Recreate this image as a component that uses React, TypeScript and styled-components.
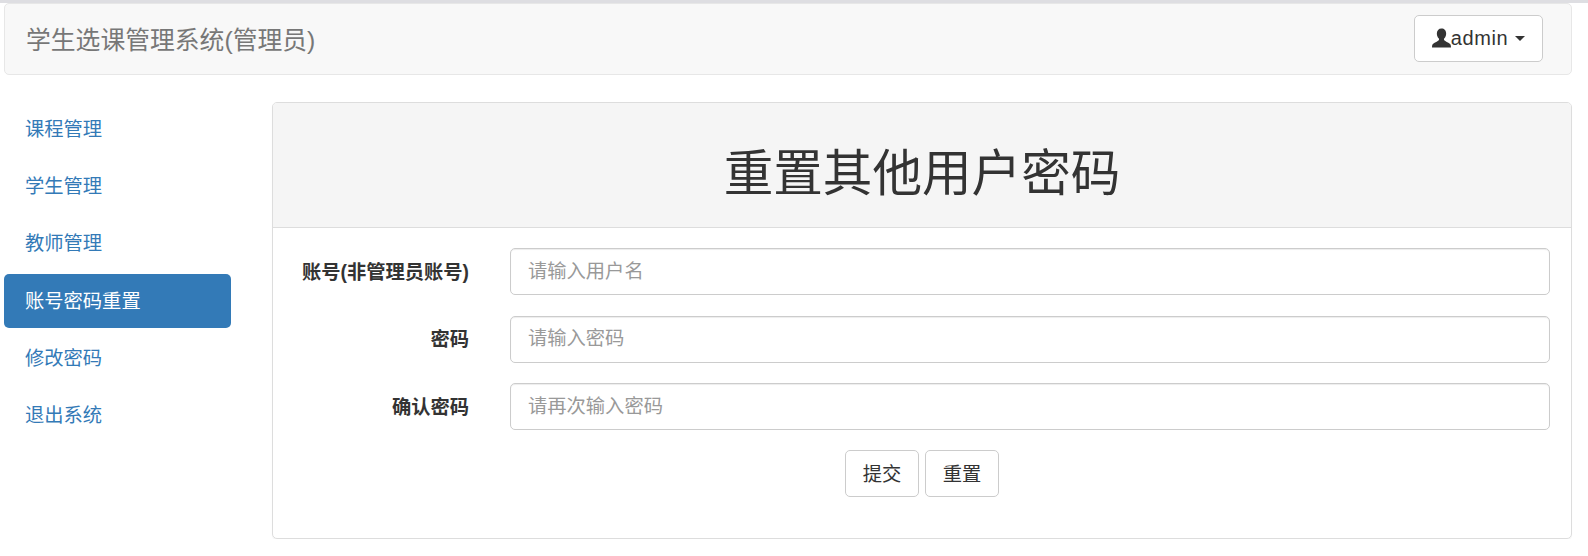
import React from "react";
import styled, { createGlobalStyle } from "styled-components";

const GlobalStyle = createGlobalStyle`
  html, body {
    margin: 0;
    background: #fff;
  }
  body {
    font-family: "Liberation Sans", "Noto Sans CJK SC", sans-serif;
    font-size: 19.3px;
    color: #333;
  }
  * {
    box-sizing: border-box;
  }
`;

const TopLine = styled.div`
  height: 3px;
  background: #dedee2;
`;

const Page = styled.div`
  padding: 0 16px 0 4px;
`;

const Navbar = styled.div`
  height: 72px;
  display: flex;
  align-items: center;
  justify-content: space-between;
  padding: 0 28px 2px 21px;
  background: #f8f8f8;
  border: 1px solid #e7e7e7;
  border-radius: 5px;
  margin-bottom: 27px;
`;

const Brand = styled.div`
  padding-bottom: 1px;
  font-size: 24.8px;
  color: #777;
`;

const UserButton = styled.button`
  width: 129px;
  height: 47px;
  display: flex;
  align-items: center;
  justify-content: center;
  padding: 0;
  font: inherit;
  font-size: 20px;
  color: #333;
  background: #fff;
  border: 1px solid #ccc;
  border-radius: 5px;
  letter-spacing: 0.6px;
`;

const Caret = styled.span`
  width: 0;
  height: 0;
  margin-left: 7px;
  border-top: 5.5px solid #333;
  border-left: 5.5px solid transparent;
  border-right: 5.5px solid transparent;
`;

const Layout = styled.div`
  display: grid;
  grid-template-columns: 227px 1fr;
  column-gap: 41px;
  align-items: start;
`;

const Sidebar = styled.nav`
  display: flex;
  flex-direction: column;
  gap: 3.3px;
  padding-top: 0.4px;
`;

const SideLink = styled.a<{ $active?: boolean }>`
  height: 54px;
  display: flex;
  align-items: center;
  padding: 0 0 3px 21px;
  border-radius: 5px;
  color: ${(p) => (p.$active ? "#fff" : "#337ab7")};
  background: ${(p) => (p.$active ? "#337ab7" : "transparent")};
`;

const Panel = styled.section`
  height: 437px;
  border: 1px solid #ddd;
  border-radius: 5px;
  box-shadow: 0 1px 1px rgba(0, 0, 0, 0.05);
  overflow: hidden;
`;

const PanelHeading = styled.div`
  height: 125px;
  display: flex;
  align-items: center;
  justify-content: center;
  padding-top: 7px;
  background: #f5f5f5;
  border-bottom: 1px solid #ddd;
`;

const Title = styled.h1`
  margin: 0;
  font-size: 49.6px;
  font-weight: 400;
  color: #333;
`;

const Form = styled.form`
  display: flex;
  flex-direction: column;
  gap: 20.5px;
  padding: 20px 21px 0 0;
`;

const Row = styled.div`
  display: grid;
  grid-template-columns: 196px 1fr;
  column-gap: 41px;
  align-items: center;
`;

const Label = styled.label`
  padding-bottom: 2px;
  text-align: right;
  font-weight: 700;
  color: #333;
`;

const Input = styled.input`
  width: 100%;
  height: 47px;
  padding: 0 17px;
  font: inherit;
  color: #555;
  border: 1px solid #ccc;
  border-radius: 5px;
  box-shadow: inset 0 1px 1px rgba(0, 0, 0, 0.075);

  &::placeholder {
    color: #999;
    opacity: 1;
  }
`;

const Actions = styled.div`
  display: flex;
  justify-content: center;
  gap: 6px;
  margin-top: -1px;
  padding-left: 21px;
`;

const Button = styled.button`
  width: 74px;
  height: 47px;
  padding: 0 0 1px;
  font: inherit;
  color: #333;
  background: #fff;
  border: 1px solid #ccc;
  border-radius: 5px;
`;

const links = ["课程管理", "学生管理", "教师管理", "账号密码重置", "修改密码", "退出系统"];

const fields = [
  { label: "账号(非管理员账号)", placeholder: "请输入用户名", type: "text" },
  { label: "密码", placeholder: "请输入密码", type: "password" },
  { label: "确认密码", placeholder: "请再次输入密码", type: "password" },
];

function UserIcon() {
  return (
    <svg width="19" height="20" viewBox="0 0 20 20" fill="#333">
      <path d="M10 0c-3 0-4.900 2.200-4.900 5.200 0 2.200.8 3.900 1.900 5.100.5.6.6 1.500.1 2.100-.9 1-4.200 2.500-5.800 3.600C.4 16.600 0 17.900 0 20h20c0-2.100-.4-3.400-1.300-4-1.600-1.100-4.900-2.600-5.800-3.600-.5-.6-.4-1.500.1-2.100 1.100-1.200 1.900-2.900 1.900-5.100C14.900 2.200 13 0 10 0z" />
    </svg>
  );
}

export default function App() {
  return (
    <>
      <GlobalStyle />
      <TopLine />
      <Page>
        <Navbar>
          <Brand>学生选课管理系统(管理员)</Brand>
          <UserButton type="button">
            <UserIcon />
            admin
            <Caret />
          </UserButton>
        </Navbar>
        <Layout>
          <Sidebar>
            {links.map((link) => (
              <SideLink key={link} $active={link === "账号密码重置"}>
                {link}
              </SideLink>
            ))}
          </Sidebar>
          <Panel>
            <PanelHeading>
              <Title>重置其他用户密码</Title>
            </PanelHeading>
            <Form>
              {fields.map((field) => (
                <Row key={field.label}>
                  <Label>{field.label}</Label>
                  <Input type={field.type} placeholder={field.placeholder} />
                </Row>
              ))}
              <Actions>
                <Button type="button">提交</Button>
                <Button type="button">重置</Button>
              </Actions>
            </Form>
          </Panel>
        </Layout>
      </Page>
    </>
  );
}
